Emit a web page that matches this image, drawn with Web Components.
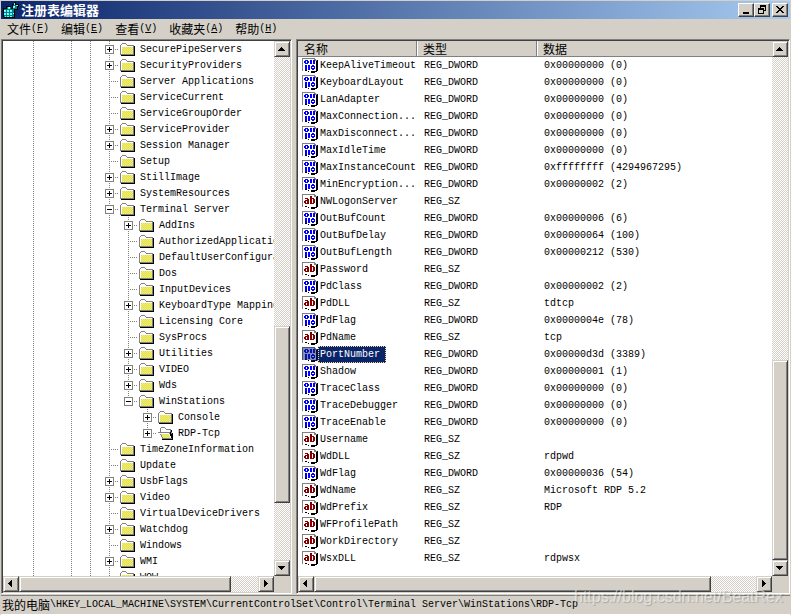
<!DOCTYPE html>
<html lang="zh-CN">
<head>
<meta charset="utf-8">
<title>注册表编辑器</title>
<style>
html, body { height: 100%; }
body {
  margin: 0; background: #d4d0c8; color: #000; overflow: hidden;
  --face: #d4d0c8; --shade: #808080; --dark: #404040; --navy: #0a246a;
  --han: 12px;
  font: 10px/16px "Liberation Mono", "Noto Sans CJK SC", monospace;
}
</style>
</head>
<body>
<reg-window>
  <reg-titlebar slot="title">注册表编辑器</reg-titlebar>
  <reg-menubar slot="menu">
    <reg-menu key="F">文件</reg-menu>
    <reg-menu key="E">编辑</reg-menu>
    <reg-menu key="V">查看</reg-menu>
    <reg-menu key="A">收藏夹</reg-menu>
    <reg-menu key="H">帮助</reg-menu>
  </reg-menubar>
  <reg-pane slot="tree" vthumb="270 176 57" hthumb="0 212 27"><reg-tree></reg-tree></reg-pane>
  <reg-pane slot="values" vthumb="304 199 0" hthumb="0 397 45"><reg-values></reg-values></reg-pane>
  <reg-status slot="status" root="我的电脑">\HKEY_LOCAL_MACHINE\SYSTEM\CurrentControlSet\Control\Terminal Server\WinStations\RDP-Tcp</reg-status>
  <reg-watermark slot="mark">https://blog.csdn.net/BeatRex</reg-watermark>
</reg-window>

<script>
const define = (name, html) => {
  const tpl = document.createElement('template');
  customElements.define(name, class extends HTMLElement {
    connectedCallback() {
      if (this.shadowRoot) return;
      tpl.innerHTML = typeof html === 'function' ? html(this) : html;
      this.attachShadow({ mode: 'open' }).append(tpl.content.cloneNode(true));
    }
  });
};

const raised = `
  background: var(--face); border: 1px solid; border-color: var(--face) var(--dark) var(--dark) var(--face);
  box-shadow: inset 1px 1px #fff, inset -1px -1px var(--shade);`;
const buttonReset = `box-sizing: border-box; margin: 0; padding: 0; font: inherit; color: inherit; border-radius: 0;`;

define('reg-window', `
<style>
  :host { position: relative; display: grid; height: 100vh; box-sizing: border-box; grid-template-rows: 18px 20px minmax(0, 1fr) auto; padding: 1px 1px 0 1px; background: var(--face); }
  main { display: grid; grid-template-columns: 291px minmax(0, 1fr); column-gap: 4px; min-height: 0; }
</style>
<slot name="title"></slot>
<slot name="menu"></slot>
<main><slot name="tree"></slot><slot name="values"></slot></main>
<slot name="status"></slot>
<slot name="mark"></slot>`);

define('reg-titlebar', `
<style>
  :host { display: flex; align-items: center; padding: 0 2px; background: linear-gradient(90deg, #0a246a, #a6caf0); color: #fff; font: bold 13px/18px "Noto Sans CJK SC", sans-serif; }
  h1 { flex: 1; margin: 0 0 0 2px; font: inherit; }
  button { ${buttonReset} ${raised} display: grid; place-items: center; width: 16px; height: 14px; border-color: #fff var(--dark) var(--dark) #fff; box-shadow: inset -1px -1px var(--shade); }
  .close { margin-left: 2px; }
  svg { display: block; }
</style>
<svg width="16" height="16" viewBox="0 0 16 16" shape-rendering="crispEdges" aria-hidden="true">
  <path fill="#000" d="M0 6h3V4h5v2h4v10H1V15H0zM9 2h2V0h2v2h3v3h-1v3h-3V7H9z"/>
  <path fill="#008284" d="M1 7h10v8H1zM4 5h4v3H4zM10 3h4v4h-4z"/>
  <path fill="#5ff" d="M1 8h2v2H1zM4 8h2v2H4zM7 8h2v2H7zM1 11h2v2H1zM4 11h2v2H4zM7 11h2v2H7zM2 14h1v1H2zM4 14h2v1H4zM7 14h2v1H7zM5 5h2v2H5zM11 1h1v2h-1zM10 4h2v2h-2zM13 3h2v1h-2z"/>
  <path fill="#fff" d="M1 8h1v1H1zM4 11h1v1H4zM7 8h1v1H7zM6 5h1v1H6zM11 4h1v1h-1zM10 11h1v1h-1z"/>
</svg>
<h1><slot></slot></h1>
<button aria-label="最小化"><svg width="12" height="10" shape-rendering="crispEdges"><path d="M3 7h6v2H3z"/></svg></button>
<button aria-label="还原"><svg width="12" height="10" shape-rendering="crispEdges"><path fill-rule="evenodd" d="M4 0h6v6H8V9H2V3h2zM5 2v1h3v2h1V2zM3 5v3h4V5z"/></svg></button>
<button class="close" aria-label="关闭"><svg width="12" height="10" shape-rendering="crispEdges"><path d="M2 1h2v1h1v1h2V2h1V1h2v1H9v1H8v1H7v1h1v1h1v1h1v1H8V7H7V6H5v1H4v1H2V7h1V6h1V5h1V4H4V3H3V2H2z"/></svg></button>`);

define('reg-menubar', `
<style>:host { display: flex; align-items: center; background: var(--face); }</style><slot></slot>`);

define('reg-menu', el => `
<style>
  :host { display: block; }
  button { ${buttonReset} border: 0; background: none; padding: 0 6px; line-height: 18px; display: flex; }
  .han { font: var(--han)/18px "Noto Sans CJK SC", sans-serif; }
</style>
<button><span class="han"><slot></slot></span><span>(<u>${el.getAttribute('key')}</u>)</span></button>`);

/* Sunken frame around slotted content, with a scroll bar on two sides */
define('reg-pane', el => `
<style>
  :host { display: grid; grid-template: minmax(0, 1fr) 16px / minmax(0, 1fr) 16px; min-height: 0; background: var(--face);
    border: 1px solid; border-color: var(--shade) #fff #fff var(--shade); padding: 1px;
    box-shadow: inset 1px 1px var(--dark); }
  .view { background: #fff; overflow: hidden; }
</style>
<div class="view"><slot></slot></div>
<reg-scrollbar parts="${el.getAttribute('vthumb')}"></reg-scrollbar>
<reg-scrollbar horizontal parts="${el.getAttribute('hthumb')}"></reg-scrollbar>`);

define('reg-scrollbar', el => {
  const h = el.hasAttribute('horizontal');
  const [a, b, c] = el.getAttribute('parts').split(' ');
  const arrows = h
    ? ['M7 3h1v7H7V9H6V8H5V7H4V6h1V5h1V4h1z', 'M5 3h1v1h1v1h1v1h1v1H8v1H7v1H6v1H5z']
    : ['M6 5h1v1h1v1h1v1h1v1H3V8h1V7h1V6h1z', 'M3 5h7v1H9v1H8v1H7v1H6V8H5V7H4V6H3z'];
  const names = h ? ['向左', '向右'] : ['向上', '向下'];
  return `
<style>
  :host { display: flex; flex-direction: ${h ? 'row' : 'column'}; background: conic-gradient(#fff 25%, var(--face) 0 50%, #fff 0 75%, var(--face) 0) 0 0 / 2px 2px; }
  button { ${buttonReset} ${raised} flex: none; width: 16px; height: 16px; }
  svg { display: block; }
  .a { flex: ${a} 0 0px; } .c { flex: ${c} 0 0px; }
  .thumb { flex: ${b} 0 0px; box-sizing: border-box; ${raised} }
</style>
<button aria-label="${names[0]}"><svg width="14" height="14" shape-rendering="crispEdges"><path d="${arrows[0]}"/></svg></button>
<div class="a"></div><div class="thumb"></div><div class="c"></div>
<button aria-label="${names[1]}"><svg width="14" height="14" shape-rendering="crispEdges"><path d="${arrows[1]}"/></svg></button>`;
});

/* depth, expander (+, -, or . for a leaf), name */
const keys = `1+SecurePipeServers
1+SecurityProviders
1.Server Applications
1.ServiceCurrent
1.ServiceGroupOrder
1+ServiceProvider
1+Session Manager
1.Setup
1+StillImage
1+SystemResources
1-Terminal Server
2+AddIns
2.AuthorizedApplications
2.DefaultUserConfiguration
2.Dos
2.InputDevices
2+KeyboardType Mapping
2.Licensing Core
2.SysProcs
2+Utilities
2+VIDEO
2+Wds
2-WinStations
3+Console
3+RDP-Tcp
1.TimeZoneInformation
1.Update
1+UsbFlags
1+Video
1.VirtualDeviceDrivers
1+Watchdog
1.Windows
1+WMI
1.WOW`.split('\n').map(s => ({ depth: +s[0], mark: s[1], name: s.slice(2) }));

define('reg-tree', `
<style>:host { display: block; }</style>
<div role="tree" aria-label="注册表项">${keys.map(k => {
  const last = k.name === 'WinStations' || k.name === 'RDP-Tcp';
  return `<reg-key depth="${k.depth}" mark="${k.mark}"${last ? ' last' : ''}${k.name === 'RDP-Tcp' ? ' open' : ''}>${k.name}</reg-key>`;
}).join('')}</div>`);

const closedFolder = `
  <path d="M14 5h1v10H1v-1h13z"/>
  <path fill="#808080" d="M2 2h4v1H2zM1 3h1v1H1zM6 3h1v1H6zM7 4h7v10H0V4h7z"/>
  <path fill="#fff" d="M2 3h4v1H2zM1 4h6v1h6v1H1zM1 5h1v8H1z"/>
  <path fill="#ff0" d="M2 6h11v7H2z"/>
  <path fill="url(#dots)" d="M2 6h11v7H2z"/>`;
const openFolder = `
  <path d="M13 5h1v3h1v7H4v-1h9z"/>
  <path fill="#808080" d="M3 2h4v1H3zM2 3h1v1H2zM7 3h1v1H7zM8 4h5v3h1v7H4v-2H3v-2H2V8H0V7h2V4h6z"/>
  <path fill="#fff" d="M3 3h4v1H3zM3 4h5v1h4v2H3zM1 8h10v1h1v2h1v2H5v-1H4v-2H3V9H1z"/>
  <path fill="#ff0" d="M3 9h8v2h1v2H5v-1H4v-2H3z"/>
  <path fill="url(#dots)" d="M3 9h8v2h1v2H5v-1H4v-2H3z"/>
  <path d="M12 7h1v2h1v4h-1v-2h-1z"/>`;

define('reg-key', el => {
  const depth = +el.getAttribute('depth'), mark = el.getAttribute('mark');
  const guides = [1, 0, 1, 1].concat(depth > 1 ? [1] : [], depth > 2 ? [0] : []);
  return `
<style>
  :host { display: flex; height: 16px; padding-left: 21px; white-space: pre; }
  i, .joint { flex: none; width: 19px; height: 16px; }
  .on { background: repeating-linear-gradient(#808080 0 1px, transparent 1px 2px) 9px 0 / 1px 100% no-repeat; }
  .joint { display: grid; place-items: center; background: repeating-linear-gradient(#808080 0 1px, transparent 1px 2px) 9px 0 / 1px ${el.hasAttribute('last') ? '9px' : '100%'} no-repeat,
    repeating-linear-gradient(90deg, #808080 0 1px, transparent 1px 2px) 9px 8px / 10px 1px no-repeat; }
  button { ${buttonReset} width: 9px; height: 9px; margin-top: 1px; border: 1px solid #808080;
    background: linear-gradient(#000 0 0) 1px 3px / 5px 1px no-repeat, linear-gradient(#000 0 0) 3px 1px / 1px ${mark === '+' ? '5px' : '0'} no-repeat, #fff; }
  svg { flex: none; display: block; margin: 0 5px 0 1px; }
  .label { line-height: 18px; }
</style>
${guides.map(g => `<i${g ? ' class="on"' : ''}></i>`).join('')}
<span class="joint">${mark === '.' ? '' : `<button aria-label="${mark === '+' ? '展开' : '折叠'}"></button>`}</span>
<svg width="15" height="16" shape-rendering="crispEdges" aria-hidden="true">
  <defs><pattern id="dots" width="2" height="2" patternUnits="userSpaceOnUse"><path fill="#d4d0c8" d="M0 0h1v1H0zM1 1h1v1H1z"/></pattern></defs>
  ${el.hasAttribute('open') ? openFolder : closedFolder}
</svg>
<span class="label" role="treeitem"><slot></slot></span>`;
});

const D = 'REG_DWORD', S = 'REG_SZ';
const values = [
  ['KeepAliveTimeout', D, '0x00000000 (0)'], ['KeyboardLayout', D, '0x00000000 (0)'],
  ['LanAdapter', D, '0x00000000 (0)'], ['MaxConnection...', D, '0x00000000 (0)'],
  ['MaxDisconnect...', D, '0x00000000 (0)'], ['MaxIdleTime', D, '0x00000000 (0)'],
  ['MaxInstanceCount', D, '0xffffffff (4294967295)'], ['MinEncryption...', D, '0x00000002 (2)'],
  ['NWLogonServer', S, ''], ['OutBufCount', D, '0x00000006 (6)'],
  ['OutBufDelay', D, '0x00000064 (100)'], ['OutBufLength', D, '0x00000212 (530)'],
  ['Password', S, ''], ['PdClass', D, '0x00000002 (2)'], ['PdDLL', S, 'tdtcp'],
  ['PdFlag', D, '0x0000004e (78)'], ['PdName', S, 'tcp'], ['PortNumber', D, '0x00000d3d (3389)'],
  ['Shadow', D, '0x00000001 (1)'], ['TraceClass', D, '0x00000000 (0)'],
  ['TraceDebugger', D, '0x00000000 (0)'], ['TraceEnable', D, '0x00000000 (0)'],
  ['Username', S, ''], ['WdDLL', S, 'rdpwd'], ['WdFlag', D, '0x00000036 (54)'],
  ['WdName', S, 'Microsoft RDP 5.2'], ['WdPrefix', S, 'RDP'], ['WFProfilePath', S, ''],
  ['WorkDirectory', S, ''], ['WsxDLL', S, 'rdpwsx']
];

define('reg-values', `
<style>
  :host { display: block; }
  table { width: 100%; table-layout: fixed; border-collapse: separate; border-spacing: 0; white-space: pre; }
  th { box-sizing: border-box; height: 16px; padding: 0 0 0 6px; text-align: left; font: var(--han)/14px "Noto Sans CJK SC", sans-serif;
    background: var(--face); border-right: 1px solid var(--shade); border-bottom: 1px solid var(--shade); box-shadow: inset 1px 0 #fff; }
  th:first-child { box-shadow: none; }
  th:last-child { border-right: 0; }
  .fixed { width: 119px; } .second { width: 120px; }
  td { height: 17px; padding: 0 0 0 7px; line-height: 17px; }
  td:first-child { padding-left: 4px; }
</style>
<table>
  <thead><tr><th class="fixed">名称</th><th class="second">类型</th><th>数据</th></tr></thead>
  <tbody>${values.map(([n, t, d]) => `<tr><td><reg-name kind="${t}"${n === 'PortNumber' ? ' selected' : ''}>${n}</reg-name></td><td>${t}</td><td>${d}</td></tr>`).join('')}</tbody>
</table>`);

const page = `
  <path d="M14 3h2v11h-1v1h-2v1H9v-1H6v-1H3v-1h11z"/>
  <path fill="#808080" d="M0 1h12v1H1v12H0zM12 1h1v1h1v1h1v1h-3z"/>
  <path fill="#fff" d="M1 2h11v2h2v10H9v1H7v-1H5v-1H3v1H1z"/>`;
const binary = `<g fill="#00f" shape-rendering="crispEdges">
  <path fill-rule="evenodd" d="M3 3h3v1h1v2H6v1H3V6H2V4h1zM4 4v2h1V4z"/><path d="M8 3h2v4H8zM11 3h2v4h-2z"/>
  <path d="M3 8h2v5H3zM6 8h2v5H6z"/><path fill-rule="evenodd" d="M10 8h2v1h1v3h-1v1h-2v-1H9V9h1zM10 10v1h2v-1z"/></g>`;
const letters = `<g fill="#840000" shape-rendering="crispEdges">
  <path fill-rule="evenodd" d="M3 5h3v1h1v5H3v-1H2V8h1V7h2V6H3zM4 8v2h1V8z"/>
  <path fill-rule="evenodd" d="M8 3h2v2h2v1h1v4h-1v1H8zM10 6v4h1V6z"/></g>`;

define('reg-name', el => `
<style>
  :host { display: flex; height: 17px; }
  svg { flex: none; display: block; }
  span { height: 17px; box-sizing: border-box; padding: 0 1px; border: 1px solid transparent; line-height: 15px; }
  :host([selected]) span { background: var(--navy); color: #fff; border: 1px dotted #f5db95; padding-right: 5px; }
</style>
<svg width="16" height="16" aria-hidden="true"><g shape-rendering="crispEdges">${page}</g>
${el.getAttribute('kind') === D ? binary : letters}
${el.hasAttribute('selected') ? '<path fill="#0a246a" fill-opacity=".5" d="M0 1h13v2h3v12H9v-1H0z"/>' : ''}</svg>
<span><slot></slot></span>`);

define('reg-status', el => `
<style>
  :host { display: flex; align-items: center; height: 18px; margin-top: 1px; border-top: 1px solid var(--shade); border-bottom: 1px solid #fff; white-space: pre; padding-left: 1px; overflow: hidden; }
  .han { font: var(--han)/18px "Noto Sans CJK SC", sans-serif; }
</style>
<span class="han">${el.getAttribute('root')}</span><span><slot></slot></span>`);

define('reg-watermark', `
<style>:host { position: absolute; right: 8px; bottom: 8px; color: rgba(255,255,255,.55); font: 16px/20px "Liberation Sans", sans-serif; text-shadow: 1px 1px 1px rgba(0,0,0,.2); pointer-events: none; }</style><slot></slot>`);
</script>
</body>
</html>
